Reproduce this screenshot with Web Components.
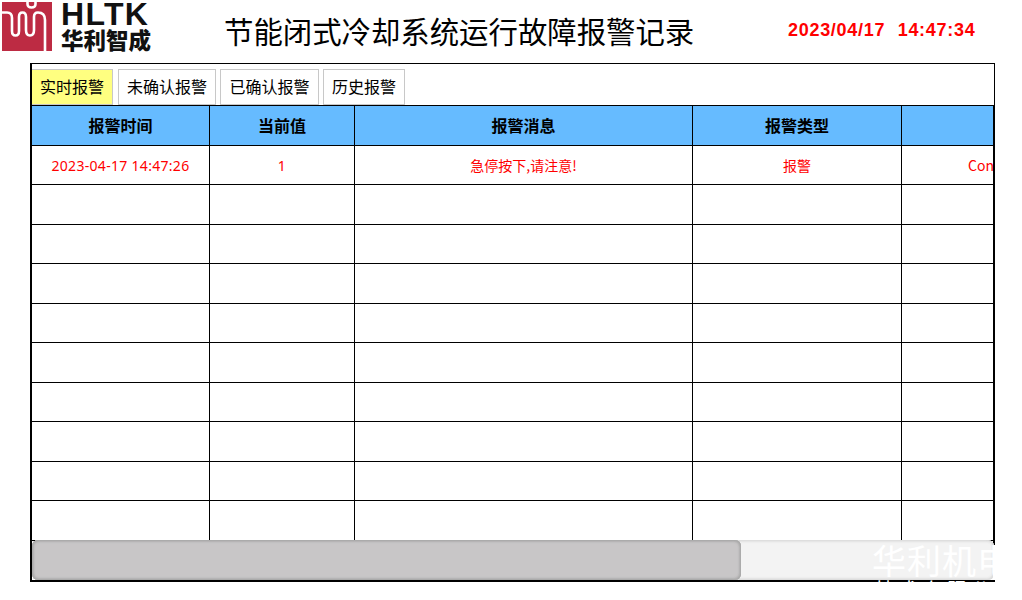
<!DOCTYPE html>
<html lang="zh">
<head>
<meta charset="utf-8">
<title>节能闭式冷却系统运行故障报警记录</title>
<style>
    html, body { margin: 0; padding: 0; background: #fff; }
    body { width: 1022px; height: 600px; overflow: hidden; font-family: "Noto Sans CJK SC", "Liberation Sans", sans-serif; }
</style>
</head>
<body>
<alarm-page></alarm-page>

<script>
// Cabecera: logo, titulo y reloj
class BrandLogo extends HTMLElement {
    constructor() {
        super();
        this.attachShadow({ mode: 'open' });
        this.shadowRoot.innerHTML = `
            <style>
                :host { display: flex; gap: 9px; }
                svg { display: block; width: 50px; height: 49px; }
                .words { display: flex; flex-direction: column; width: 92px; color: #111; }
                .en { font: bold 32px/24px "Liberation Sans", sans-serif; letter-spacing: 1.3px; height: 25px; white-space: nowrap; }
                .cn { font: 900 22.5px/24px "Noto Sans CJK SC", sans-serif; white-space: nowrap; }
            </style>
            <svg viewBox="0 0 50 49">
                <rect width="50" height="49" fill="#bd2b43"/>
                <path d="M0 10.5H5Q10 10.5 10 16V29Q10 33.5 13.5 33.5Q17 33.5 17 29V15Q17 10.5 20.5 10.5Q24 10.5 24 15V28Q24 33.5 28 33.5Q32 33.5 32 28V15Q32 10.5 36 10.5Q43 10.5 43 18V49" fill="none" stroke="#fff" stroke-width="2.6"/>
                <path d="M25.5 0V2Q25.5 5.5 29.5 5.5Q33.5 5.5 33.5 2V0" fill="none" stroke="#fff" stroke-width="2.6"/>
            </svg>
            <div class="words">
                <div class="en">HLTK</div>
                <div class="cn">华利智成</div>
            </div>
        `;
    }
}
customElements.define('brand-logo', BrandLogo);

class PageHeader extends HTMLElement {
    constructor() {
        super();
        this.attachShadow({ mode: 'open' });
        this.shadowRoot.innerHTML = `
            <style>
                :host { display: flex; height: 63px; box-sizing: border-box; padding: 2px 0 0 2px; }
                .title { margin-left: 71px; margin-top: 6px; width: 564px; font: 400 29.4px/44px "Noto Sans CJK SC", sans-serif; color: #000; white-space: nowrap; }
                .clock { margin-left: 0; margin-top: 18px; font: bold 18px/20px "Liberation Sans", sans-serif; color: #f00; white-space: pre; letter-spacing: 0.7px; word-spacing: 0.6px; }
            </style>
            <brand-logo></brand-logo>
            <div class="title"><slot></slot></div>
            <div class="clock">2023/04/17  14:47:34</div>
        `;
    }
}
customElements.define('page-header', PageHeader);

// Pestañas de tipo de alarma
class AlarmTab extends HTMLElement {
    constructor() {
        super();
        this.attachShadow({ mode: 'open' });
        this.shadowRoot.innerHTML = `
            <style>
                :host {
                    display: flex; align-items: center; justify-content: center;
                    box-sizing: border-box; height: 36px; padding-bottom: 2px;
                    border: 1px solid #c8c8c8; background: #fff;
                    font: 400 16px/20px "Noto Sans CJK SC", sans-serif; color: #000;
                    white-space: nowrap;
                }
                :host([active]) { background: #ffff80; margin-right: 1px; }
            </style>
            <slot></slot>
        `;
    }
}
customElements.define('alarm-tab', AlarmTab);

class AlarmTabs extends HTMLElement {
    constructor() {
        super();
        this.attachShadow({ mode: 'open' });
        this.shadowRoot.innerHTML = `
            <style>
                :host { display: flex; gap: 4px; height: 41px; box-sizing: border-box; padding-top: 5px; }
                ::slotted(alarm-tab) { flex: none; }
            </style>
            <slot></slot>
        `;
    }
}
customElements.define('alarm-tabs', AlarmTabs);

// Tabla de alarmas con filas vacias
const COLUMNS = '178px 145px 338px 209px 1fr';

class AlarmRow extends HTMLElement {
    constructor() {
        super();
        this.attachShadow({ mode: 'open' });
        const cells = JSON.parse(this.getAttribute('cells') || '["","","","",""]');
        this.shadowRoot.innerHTML = `
            <style>
                :host {
                    display: grid; grid-template-columns: ${COLUMNS};
                    box-sizing: border-box; height: 39.5px;
                    border-bottom: 1px solid #000;
                    font: 400 14px/20px "Noto Sans CJK SC", sans-serif; color: #f00;
                }
                :host([head]) {
                    height: 39.6px; background: #66bbff; color: #000;
                    font: 700 16px/20px "Noto Sans CJK SC", sans-serif;
                }
                .cell {
                    display: flex; align-items: center; justify-content: center;
                    box-sizing: border-box; border-right: 1px solid #000;
                    overflow: hidden; white-space: nowrap;
                }
                .cell:last-child { border-right: 0; justify-content: flex-start; padding-left: 66px; }
                .num { font-family: "Noto Sans", "Noto Sans CJK SC", sans-serif; letter-spacing: 0.3px; margin-top: 2px; }
            </style>
            ${cells.map(c => `<div class="cell">${c}</div>`).join('')}
        `;
    }
}
customElements.define('alarm-row', AlarmRow);

class AlarmTable extends HTMLElement {
    constructor() {
        super();
        this.attachShadow({ mode: 'open' });
        this.shadowRoot.innerHTML = `
            <style>
                :host { display: block; flex: 1; min-height: 0; overflow: hidden; border-top: 1px solid #000; }
            </style>
            <slot></slot>
        `;
    }
}
customElements.define('alarm-table', AlarmTable);

// Barra de scroll horizontal, va encima de la tabla
class FakeScrollbar extends HTMLElement {
    constructor() {
        super();
        this.attachShadow({ mode: 'open' });
        this.shadowRoot.innerHTML = `
            <style>
                :host {
                    position: absolute; left: 0; right: 0; bottom: 0; height: 40px;
                    background: #f3f3f3; border-radius: 6px;
                    box-shadow: inset 0 1px 3px #d8d8d8, inset 0 -1px 3px #d8d8d8, inset -1px 0 3px #d8d8d8;
                }
                .thumb {
                    width: 709px; height: 100%;
                    background: #c8c6c7; border-radius: 6px;
                    box-shadow: inset 0 1px 3px #a8a8a8, inset 0 -1px 3px #a8a8a8, inset 1px 0 3px #a8a8a8, inset -1px 0 3px #a8a8a8;
                }
            </style>
            <div class="thumb"></div>
        `;
    }
}
customElements.define('fake-scrollbar', FakeScrollbar);

// Marca de agua blanca, recortada por el borde derecho del panel
class WaterMark extends HTMLElement {
    constructor() {
        super();
        this.attachShadow({ mode: 'open' });
        this.shadowRoot.innerHTML = `
            <style>
                :host {
                    position: absolute; left: 872px; top: 540px;
                    color: #fff; white-space: nowrap;
                    font-family: "Noto Sans CJK SC", sans-serif;
                }
                .a { font-size: 34px; line-height: 40px; letter-spacing: 1px; }
                .b { font-size: 20px; line-height: 24px; letter-spacing: 4px; margin-top: -2px; margin-left: 3px; }
            </style>
            <div class="a">华利机电</div>
            <div class="b">技术有限公司</div>
        `;
    }
}
customElements.define('water-mark', WaterMark);

class AlarmPage extends HTMLElement {
    constructor() {
        super();
        this.attachShadow({ mode: 'open' });
        const blank = Array.from({ length: 9 }, () => '<alarm-row></alarm-row>').join('');
        this.shadowRoot.innerHTML = `
            <style>
                :host { display: block; position: relative; width: 995px; height: 600px; overflow: hidden; }
                .panel {
                    position: relative; display: flex; flex-direction: column;
                    box-sizing: border-box; margin-left: 30px; width: 965px; height: 519px;
                    border-top: 1px solid #000; border-right: 1px solid #000;
                    border-left: 2px solid #000; border-bottom: 2px solid #000;
                    overflow: hidden;
                }
                .tabsline { margin-left: -1px; }
                .right { position: absolute; top: 41px; right: 0; bottom: 0; width: 1px; background: #000; }
                .gap { position: absolute; left: 993px; top: 545px; width: 2px; height: 35px; background: #fff; }
            </style>
            <page-header>节能闭式冷却系统运行故障报警记录</page-header>
            <div class="panel">
                <alarm-tabs class="tabsline">
                    <alarm-tab active style="width:82px">实时报警</alarm-tab>
                    <alarm-tab style="width:98px">未确认报警</alarm-tab>
                    <alarm-tab style="width:99px">已确认报警</alarm-tab>
                    <alarm-tab style="width:82px">历史报警</alarm-tab>
                </alarm-tabs>
                <alarm-table>
                    <alarm-row head cells='["报警时间","当前值","报警消息","报警类型",""]'></alarm-row>
                    <alarm-row cells='["&lt;span class=num&gt;2023-04-17 14:47:26&lt;/span&gt;","&lt;span class=num&gt;1&lt;/span&gt;","急停按下,请注意!","报警","Con"]'></alarm-row>
                    ${blank}
                </alarm-table>
                <div class="right"></div>
                <fake-scrollbar></fake-scrollbar>
            </div>
            <div class="gap"></div>
            <water-mark></water-mark>
        `;
    }
}
customElements.define('alarm-page', AlarmPage);
</script>
</body>
</html>
